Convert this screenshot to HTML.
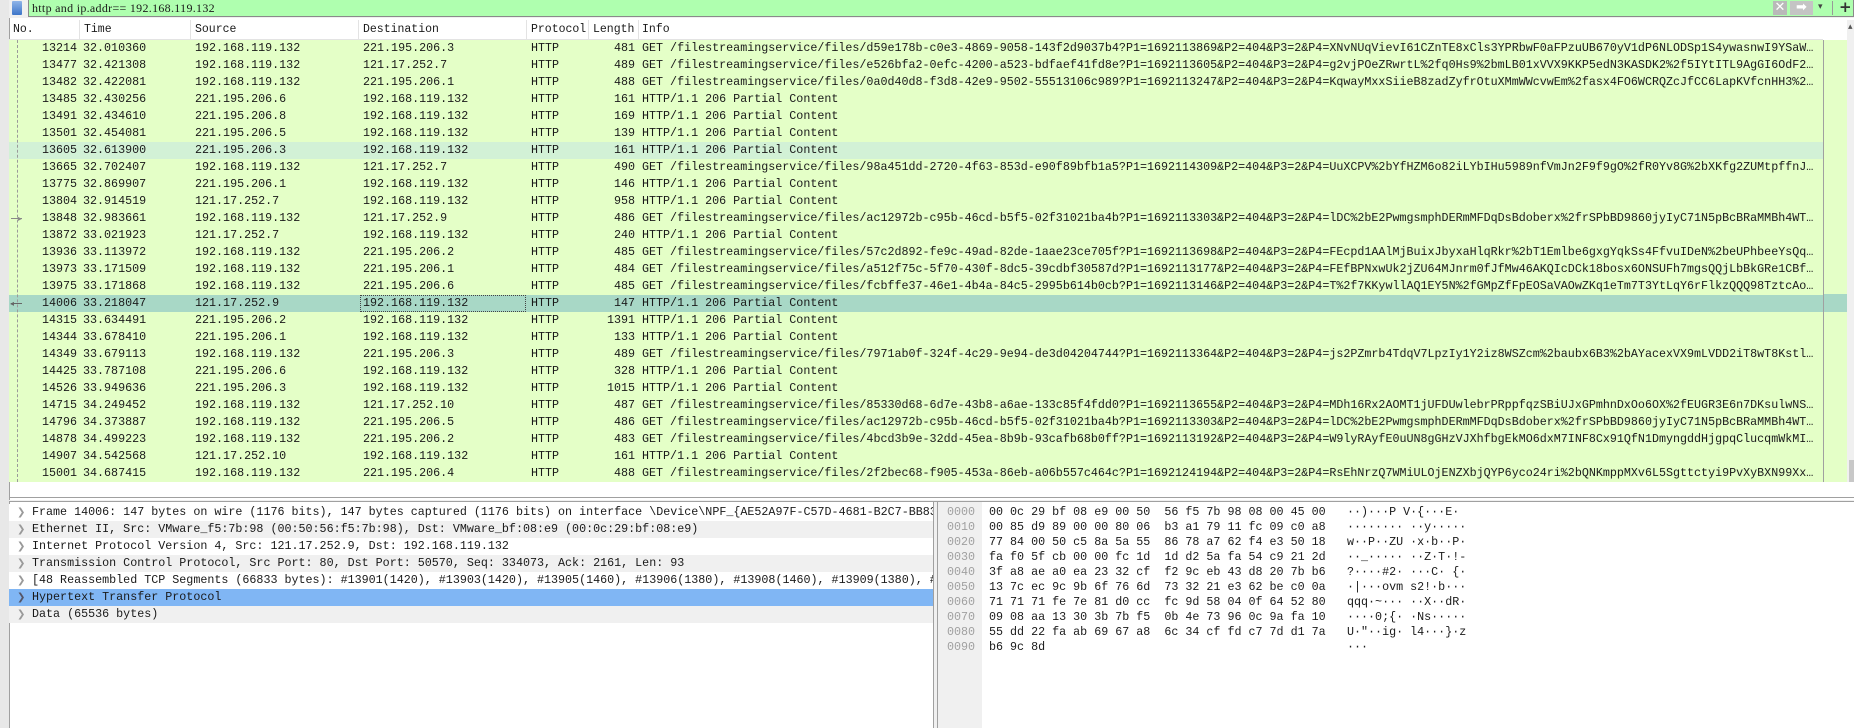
<!DOCTYPE html>
<html><head><meta charset="utf-8">
<style>
*{margin:0;padding:0;box-sizing:border-box}
body{width:1854px;height:728px;overflow:hidden;background:#f0f0f0;font-family:"Liberation Mono","DejaVu Sans Mono",monospace;font-size:11.7px;color:#1a1a1a;position:relative}
.abs{position:absolute}
.pre{white-space:pre}
#filter{left:28px;top:0;width:1826px;height:17px;background:#afffaf;border:1px solid #8a8a8a;border-top:none}
#filter .t{position:absolute;left:3px;top:1px;font-family:"Liberation Serif",serif;font-size:12px;letter-spacing:.3px}
#list{left:9px;top:18px;width:1845px;height:482px;background:#fff;border-left:1px solid #a0a0a0;overflow:hidden}
.hdr{position:absolute;top:2px;height:20px;line-height:20px;font-family:"Liberation Mono",monospace;font-size:11.5px;}
.sep{position:absolute;top:2px;width:1px;height:20px;background:#e3e3e3}
.row{position:absolute;left:9px;width:1814px;height:17px;line-height:17px;background:#e4ffc7;white-space:pre}
.row span{position:absolute;top:0}
.info{left:633px;width:1178px;overflow:hidden;text-overflow:ellipsis}
.dl{position:absolute;left:9px;width:924px;height:17px;line-height:17px;white-space:pre;overflow:hidden}
.dl .a{position:absolute;left:8px;color:#999;font-family:"DejaVu Sans",sans-serif;font-size:10px}
.dl .x{position:absolute;left:23px}
.hx{position:absolute;height:15px;line-height:15px;white-space:pre}
</style></head><body>

<!-- filter bar -->
<div class="abs" style="left:0;top:0;width:9px;height:728px;background:#e8e8e8"></div>
<div class="abs" id="filter"><span class="t">http and ip.addr== 192.168.119.132</span></div>
<div class="abs" style="left:12px;top:1px;width:10px;height:14px;background:linear-gradient(#8fb4e8,#3d76c9);border-radius:1px"></div>
<div class="abs" style="left:1773px;top:1px;width:14px;height:14px;background:#b9b9b9;color:#fff;font:bold 13px 'DejaVu Sans',sans-serif;line-height:14px;text-align:center">✕</div>
<div class="abs" style="left:1790px;top:1px;width:23px;height:14px;background:#c4c4c4;color:#fff;font:bold 13px 'DejaVu Sans',sans-serif;line-height:14px;text-align:center">➡</div>
<div class="abs" style="left:1818px;top:2px;font:9px 'DejaVu Sans',sans-serif;color:#444">▾</div>
<div class="abs" style="left:1832px;top:1px;width:1px;height:14px;background:#999"></div>
<div class="abs" style="left:1839px;top:-2px;font:bold 15px 'DejaVu Sans',sans-serif;color:#333">+</div>

<!-- packet list -->
<div class="abs" id="list"></div>
<div class="abs" style="left:9px;top:40px;width:1814px;height:442px;background:#fff"></div>
<div class="hdr" style="left:13px;top:20px">No.</div>
<div class="hdr" style="left:84px;top:20px">Time</div>
<div class="hdr" style="left:195px;top:20px">Source</div>
<div class="hdr" style="left:363px;top:20px">Destination</div>
<div class="hdr" style="left:531px;top:20px">Protocol</div>
<div class="hdr" style="left:593px;top:20px">Length</div>
<div class="hdr" style="left:642px;top:20px">Info</div>
<div class="sep" style="left:79px;top:20px"></div>
<div class="sep" style="left:190px;top:20px"></div>
<div class="sep" style="left:358px;top:20px"></div>
<div class="sep" style="left:526px;top:20px"></div>
<div class="sep" style="left:588px;top:20px"></div>
<div class="sep" style="left:638px;top:20px"></div>
<div class="abs" style="left:9px;top:39px;width:1814px;height:1px;background:#e3e3e3"></div>

<div id="rows"></div>
<!-- scrollbar -->
<div class="abs" style="left:1823px;top:40px;width:1px;height:442px;background:#a0a0a0"></div>
<div class="abs" style="left:1824px;top:40px;width:23px;height:442px;background:#e4ffc7"></div>
<div class="abs" style="left:1824px;top:294px;width:23px;height:18px;background:#a8d8c6"></div>
<div class="abs" style="left:1847px;top:20px;width:7px;height:462px;background:#f0f0f0"></div>
<div class="abs" style="left:1849px;top:460px;width:5px;height:22px;background:#c8c8c8"></div>
<div class="abs" style="left:1848px;top:22px;font:9px 'DejaVu Sans',sans-serif;color:#555">▴</div>

<!-- splitter -->
<div class="abs" style="left:9px;top:497px;width:1845px;height:1px;background:#a0a0a0"></div>
<div class="abs" style="left:9px;top:501px;width:1845px;height:1px;background:#a0a0a0"></div>

<!-- details -->
<div class="abs" style="left:9px;top:502px;width:924px;height:226px;background:#fff"></div>
<div class="abs" style="left:9px;top:502px;width:1px;height:226px;background:#a0a0a0"></div>
<div class="dl" style="top:504px;background:#fff"><span class="a">❯</span><span class="x">Frame 14006: 147 bytes on wire (1176 bits), 147 bytes captured (1176 bits) on interface \Device\NPF_{AE52A97F-C57D-4681-B2C7-BB83</span></div>
<div class="dl" style="top:521px;background:#f0f0f0"><span class="a">❯</span><span class="x">Ethernet II, Src: VMware_f5:7b:98 (00:50:56:f5:7b:98), Dst: VMware_bf:08:e9 (00:0c:29:bf:08:e9)</span></div>
<div class="dl" style="top:538px;background:#fff"><span class="a">❯</span><span class="x">Internet Protocol Version 4, Src: 121.17.252.9, Dst: 192.168.119.132</span></div>
<div class="dl" style="top:555px;background:#f0f0f0"><span class="a">❯</span><span class="x">Transmission Control Protocol, Src Port: 80, Dst Port: 50570, Seq: 334073, Ack: 2161, Len: 93</span></div>
<div class="dl" style="top:572px;background:#fff"><span class="a">❯</span><span class="x">[48 Reassembled TCP Segments (66833 bytes): #13901(1420), #13903(1420), #13905(1460), #13906(1380), #13908(1460), #13909(1380), #</span></div>
<div class="dl" style="top:589px;background:#80b6f4"><span class="a" style="color:#556">❯</span><span class="x">Hypertext Transfer Protocol</span></div>
<div class="dl" style="top:606px;background:#f0f0f0"><span class="a">❯</span><span class="x">Data (65536 bytes)</span></div>
<div class="abs" style="left:933px;top:502px;width:1px;height:226px;background:#a0a0a0"></div>
<div class="abs" style="left:937px;top:502px;width:1px;height:226px;background:#a0a0a0"></div>

<!-- hex -->
<div class="abs" style="left:938px;top:502px;width:916px;height:226px;background:#fff"></div>
<div class="abs" style="left:938px;top:502px;width:44px;height:226px;background:#f0f0f0"></div>
<div id="hex"></div>

<script>
var R=[
["13214","32.010360","192.168.119.132","221.195.206.3","481","GET /filestreamingservice/files/d59e178b-c0e3-4869-9058-143f2d9037b4?P1=1692113869&P2=404&P3=2&P4=XNvNUqVievI61CZnTE8xCls3YPRbwF0aFPzuUB670yV1dP6NLODSp1S4ywasnwI9YSaWxx"],
["13477","32.421308","192.168.119.132","121.17.252.7","489","GET /filestreamingservice/files/e526bfa2-0efc-4200-a523-bdfaef41fd8e?P1=1692113605&P2=404&P3=2&P4=g2vjPOeZRwrtL%2fq0Hs9%2bmLB01xVVX9KKP5edN3KASDK2%2f5IYtITL9AgGI6OdF2xx"],
["13482","32.422081","192.168.119.132","221.195.206.1","488","GET /filestreamingservice/files/0a0d40d8-f3d8-42e9-9502-55513106c989?P1=1692113247&P2=404&P3=2&P4=KqwayMxxSiieB8zadZyfrOtuXMmWWcvwEm%2fasx4FO6WCRQZcJfCC6LapKVfcnHH3%2xx"],
["13485","32.430256","221.195.206.6","192.168.119.132","161","HTTP/1.1 206 Partial Content"],
["13491","32.434610","221.195.206.8","192.168.119.132","169","HTTP/1.1 206 Partial Content"],
["13501","32.454081","221.195.206.5","192.168.119.132","139","HTTP/1.1 206 Partial Content"],
["13605","32.613900","221.195.206.3","192.168.119.132","161","HTTP/1.1 206 Partial Content"],
["13665","32.702407","192.168.119.132","121.17.252.7","490","GET /filestreamingservice/files/98a451dd-2720-4f63-853d-e90f89bfb1a5?P1=1692114309&P2=404&P3=2&P4=UuXCPV%2bYfHZM6o82iLYbIHu5989nfVmJn2F9f9gO%2fR0Yv8G%2bXKfg2ZUMtpffnJxxxx"],
["13775","32.869907","221.195.206.1","192.168.119.132","146","HTTP/1.1 206 Partial Content"],
["13804","32.914519","121.17.252.7","192.168.119.132","958","HTTP/1.1 206 Partial Content"],
["13848","32.983661","192.168.119.132","121.17.252.9","486","GET /filestreamingservice/files/ac12972b-c95b-46cd-b5f5-02f31021ba4b?P1=1692113303&P2=404&P3=2&P4=lDC%2bE2PwmgsmphDERmMFDqDsBdoberx%2frSPbBD9860jyIyC71N5pBcBRaMMBh4WTxx"],
["13872","33.021923","121.17.252.7","192.168.119.132","240","HTTP/1.1 206 Partial Content"],
["13936","33.113972","192.168.119.132","221.195.206.2","485","GET /filestreamingservice/files/57c2d892-fe9c-49ad-82de-1aae23ce705f?P1=1692113698&P2=404&P3=2&P4=FEcpd1AAlMjBuixJbyxaHlqRkr%2bT1Emlbe6gxgYqkSs4FfvuIDeN%2beUPhbeeYsQqxx"],
["13973","33.171509","192.168.119.132","221.195.206.1","484","GET /filestreamingservice/files/a512f75c-5f70-430f-8dc5-39cdbf30587d?P1=1692113177&P2=404&P3=2&P4=FEfBPNxwUk2jZU64MJnrm0fJfMw46AKQIcDCk18bosx6ONSUFh7mgsQQjLbBkGRe1CBfxx"],
["13975","33.171868","192.168.119.132","221.195.206.6","485","GET /filestreamingservice/files/fcbffe37-46e1-4b4a-84c5-2995b614b0cb?P1=1692113146&P2=404&P3=2&P4=T%2f7KKywllAQ1EY5N%2fGMpZfFpEOSaVAOwZKq1eTm7T3YtLqY6rFlkzQQQ98TztcAoxx"],
["14006","33.218047","121.17.252.9","192.168.119.132","147","HTTP/1.1 206 Partial Content"],
["14315","33.634491","221.195.206.2","192.168.119.132","1391","HTTP/1.1 206 Partial Content"],
["14344","33.678410","221.195.206.1","192.168.119.132","133","HTTP/1.1 206 Partial Content"],
["14349","33.679113","192.168.119.132","221.195.206.3","489","GET /filestreamingservice/files/7971ab0f-324f-4c29-9e94-de3d04204744?P1=1692113364&P2=404&P3=2&P4=js2PZmrb4TdqV7LpzIy1Y2iz8WSZcm%2baubx6B3%2bAYacexVX9mLVDD2iT8wT8Kstlxx"],
["14425","33.787108","221.195.206.6","192.168.119.132","328","HTTP/1.1 206 Partial Content"],
["14526","33.949636","221.195.206.3","192.168.119.132","1015","HTTP/1.1 206 Partial Content"],
["14715","34.249452","192.168.119.132","121.17.252.10","487","GET /filestreamingservice/files/85330d68-6d7e-43b8-a6ae-133c85f4fdd0?P1=1692113655&P2=404&P3=2&P4=MDh16Rx2AOMT1jUFDUwlebrPRppfqzSBiUJxGPmhnDxOo6OX%2fEUGR3E6n7DKsulwNSxx"],
["14796","34.373887","192.168.119.132","221.195.206.5","486","GET /filestreamingservice/files/ac12972b-c95b-46cd-b5f5-02f31021ba4b?P1=1692113303&P2=404&P3=2&P4=lDC%2bE2PwmgsmphDERmMFDqDsBdoberx%2frSPbBD9860jyIyC71N5pBcBRaMMBh4WTxx"],
["14878","34.499223","192.168.119.132","221.195.206.2","483","GET /filestreamingservice/files/4bcd3b9e-32dd-45ea-8b9b-93cafb68b0ff?P1=1692113192&P2=404&P3=2&P4=W9lyRAyfE0uUN8gGHzVJXhfbgEkMO6dxM7INF8Cx91QfN1DmyngddHjgpqClucqmWkMIxx"],
["14907","34.542568","121.17.252.10","192.168.119.132","161","HTTP/1.1 206 Partial Content"],
["15001","34.687415","192.168.119.132","221.195.206.4","488","GET /filestreamingservice/files/2f2bec68-f905-453a-86eb-a06b557c464c?P1=1692124194&P2=404&P3=2&P4=RsEhNrzQ7WMiULOjENZXbjQYP6yco24ri%2bQNKmppMXv6L5Sgttctyi9PvXyBXN99Xxxx"]
];
var h="";
R.forEach(function(r,i){
 var y=40+i*17,bg="#e4ffc7";
 if(r[0]=="13605")bg="#d2f1d6";
 if(r[0]=="14006")bg="#a8d8c6";
 h+='<div class="row" style="top:'+y+'px;background:'+bg+'">'+
 '<span style="left:'+(68-r[0].length*7)+'px">'+r[0]+'</span>'+
 '<span style="left:74px">'+r[1]+'</span>'+
 '<span style="left:186px">'+r[2]+'</span>'+
 '<span style="left:354px">'+r[3]+'</span>'+
 '<span style="left:522px">HTTP</span>'+
 '<span style="left:'+(626-r[4].length*7)+'px">'+r[4]+'</span>'+
 '<span class="info">'+r[5].replace(/&/g,"&amp;")+'</span></div>';
});
h+='<div class="abs" style="left:17px;top:40px;height:442px;border-left:1px dashed #9a9a9a"></div>';
h+='<div class="abs" style="left:11px;top:218px;width:11px;height:1px;background:#888"></div><div class="abs" style="left:18px;top:214px;font:8px sans-serif;color:#888">▸</div>';
h+='<div class="abs" style="left:11px;top:303px;width:11px;height:1px;background:#666"></div><div class="abs" style="left:10px;top:299px;font:8px sans-serif;color:#666">◂</div>';
h+='<div class="abs" style="left:360px;top:295px;width:166px;height:17px;border:1px dotted #444"></div>';
document.getElementById("rows").innerHTML=h;

var HX=["00 0c 29 bf 08 e9 00 50  56 f5 7b 98 08 00 45 00","00 85 d9 89 00 00 80 06  b3 a1 79 11 fc 09 c0 a8","77 84 00 50 c5 8a 5a 55  86 78 a7 62 f4 e3 50 18","fa f0 5f cb 00 00 fc 1d  1d d2 5a fa 54 c9 21 2d","3f a8 ae a0 ea 23 32 cf  f2 9c eb 43 d8 20 7b b6","13 7c ec 9c 9b 6f 76 6d  73 32 21 e3 62 be c0 0a","71 71 71 fe 7e 81 d0 cc  fc 9d 58 04 0f 64 52 80","09 08 aa 13 30 3b 7b f5  0b 4e 73 96 0c 9a fa 10","55 dd 22 fa ab 69 67 a8  6c 34 cf fd c7 7d d1 7a","b6 9c 8d"];
var AS=["··)···P V·{···E·","········ ··y·····","w··P··ZU ·x·b··P·","··_····· ··Z·T·!-","?····#2· ···C· {·","·|···ovm s2!·b···","qqq·~··· ··X··dR·","····0;{· ·Ns·····","U·\"··ig· l4···}·z","···"];
var g="";
HX.forEach(function(l,i){
 var y=505+i*15;
 g+='<div class="hx" style="left:947px;top:'+y+'px;color:#a0a0a0">00'+(i.toString(16))+'0</div>';
 g+='<div class="hx" style="left:989px;top:'+y+'px">'+l+'</div>';
 g+='<div class="hx" style="left:1347px;top:'+y+'px">'+AS[i].replace(/</g,"&lt;")+'</div>';
});
document.getElementById("hex").innerHTML=g;
</script>
</body></html>
